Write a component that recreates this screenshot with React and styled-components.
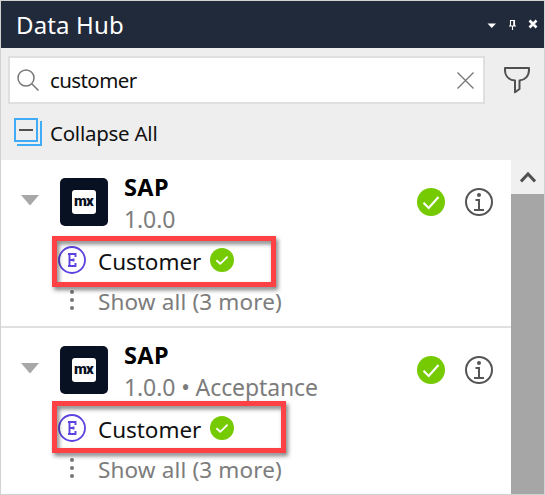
import React from "react";
import styled, { createGlobalStyle } from "styled-components";

const Global = createGlobalStyle`
  *, *::before, *::after { box-sizing: border-box; }
  body { margin: 0; background: #fff; font-family: "Noto Sans", "Open Sans", sans-serif; }
  svg { display: block; flex: none; }
`;

const Panel = styled.main`
  width: 545px;
  height: 495px;
  display: flex;
  flex-direction: column;
  border: 1px solid #d2d2d2;
  background: #eee;
  overflow: hidden;
`;

const TitleBar = styled.header`
  height: 47px;
  flex: none;
  display: flex;
  align-items: center;
  padding: 0 6px 0 15px;
  background: #212a3a;
`;

const Title = styled.h1`
  flex: 1;
  margin: 0;
  font-size: 24px;
  font-weight: 400;
  line-height: 48px;
  letter-spacing: 0.15px;
  color: #fff;
`;

const SearchRow = styled.div`
  display: flex;
  align-items: center;
  padding: 8px 13px 0 7px;
  height: 56px;
  flex: none;
`;

const SearchBox = styled.label`
  width: 477px;
  height: 48px;
  display: flex;
  align-items: center;
  padding: 0 9px 0 7px;
  border: 2px solid #dfdfdf;
  background: #fff;
`;

const SearchText = styled.span`
  flex: 1;
  padding: 0 0 0 10px;
  font-size: 20.5px;
  line-height: 44px;
  letter-spacing: -0.6px;
  color: #111;
`;

const FilterButton = styled.span`
  margin-left: 18px;
`;

const CollapseRow = styled.div`
  height: 56px;
  flex: none;
  display: flex;
  align-items: flex-start;
  gap: 8px;
  padding: 13px 0 0 12px;
`;

const CollapseText = styled.span`
  font-size: 20.5px;
  line-height: 32px;
  letter-spacing: -0.25px;
  color: #111;
`;

const Results = styled.div`
  flex: 1;
  min-height: 0;
  display: flex;
`;

const List = styled.div`
  width: 510px;
  background: #fff;
`;

const ScrollBar = styled.div`
  width: 33px;
  background: #a6a6a6;
`;

const ScrollUp = styled.div`
  height: 34px;
  display: flex;
  align-items: center;
  justify-content: center;
  background: #f0f0f0;
`;

const Item = styled.section`
  position: relative;
  height: 168px;
  padding: 14px 18px 0 19px;
  border-bottom: 2px solid #e0e0e0;
  &:last-child { border-bottom: 0; }
`;

const ItemHead = styled.div`
  display: flex;
  height: 66px;
`;

const Toggle = styled.span`
  margin-top: 20px;
  width: 40px;
`;

const Logo = styled.div`
  width: 48px;
  height: 48px;
  margin-top: 4px;
  display: flex;
  align-items: center;
  justify-content: center;
  border-radius: 5px;
  background: #081122;
`;

const LogoTile = styled.span`
  width: 24px;
  height: 24px;
  border-radius: 3px;
  background: #fff;
  color: #081122;
  text-align: center;
  font: 900 15px/23px "Roboto", sans-serif;
  letter-spacing: -0.9px;
  padding-right: 1px;
`;

const Names = styled.div`
  flex: 1;
  padding-left: 16px;
`;

const Name = styled.div`
  font-size: 23.5px;
  font-weight: 700;
  line-height: 26px;
  letter-spacing: 0.4px;
  color: #000;
`;

const Version = styled.div`
  font-size: 23px;
  line-height: 32px;
  padding-top: 3px;
  letter-spacing: -0.1px;
  color: #7c7c7c;
  white-space: nowrap;
`;

const Actions = styled.div`
  display: flex;
  gap: 20px;
  padding-top: 14px;
`;

const EntityRow = styled.div`
  display: flex;
  align-items: center;
  height: 40px;
  padding-left: 38px;
`;

const EntityName = styled.span`
  width: 113px;
  padding-left: 12px;
  margin-right: 11px;
  font-size: 22.5px;
  line-height: 40px;
  letter-spacing: -0.05px;
  color: #111;
  margin-top: 4px;
`;

const MoreRow = styled.div`
  display: flex;
  align-items: center;
  height: 40px;
  padding-left: 49px;
  gap: 24px;
`;

const MoreText = styled.span`
  font-size: 22.5px;
  line-height: 40px;
  margin-top: 4px;
  letter-spacing: 0.15px;
  color: #7c7c7c;
  white-space: nowrap;
`;

const Highlight = styled.div`
  position: absolute;
  left: 51px;
  top: ${(p) => p.$top}px;
  width: ${(p) => p.$width}px;
  height: ${(p) => p.$height}px;
  border: 5px solid #fd4145;
  filter: drop-shadow(2px 3px 2px rgba(0, 0, 0, 0.5));
`;

const Check = ({ size }) => (
  <svg width={size} height={size} viewBox="0 0 28 28">
    <circle cx="14" cy="14" r="14" fill="#76ca02" />
    <path d={size > 24 ? "M6.5 14.8 L11.7 20 L21.5 9" : "M7.5 14.3 L12 18.4 L20.5 10"} fill="none" stroke="#fff" strokeWidth="2.1" />
  </svg>
);

const Info = () => (
  <svg width="28" height="28" fill="none" stroke="#555" strokeWidth="2">
    <circle cx="14" cy="14" r="13" />
    <circle cx="14" cy="7" r="2" fill="#555" stroke="none" />
    <path d="M10.5 12H14V22M9 22H19" />
  </svg>
);

const Entity = () => (
  <svg width="28" height="28" fill="none" stroke="#5b43e0">
    <circle cx="14" cy="14" r="13" strokeWidth="1.8" />
    <path d="M10 8H17.5V11M10 20H17.5V17M11.5 8V20M11.5 14H15.5M15.5 12.5V15.5" strokeWidth="1.9" />
  </svg>
);

const items = [
  { version: "1.0.0", top: 76, width: 224, height: 51 },
  { version: "1.0.0 • Acceptance", top: 73, width: 234, height: 52 },
];

export default function App() {
  return (
    <>
      <Global />
      <Panel>
        <TitleBar>
          <Title>Data Hub</Title>
          <svg width="51" height="12" fill="none" stroke="#fff">
            <path d="M0.5 4.5H9L4.75 9Z" fill="#fff" stroke="none" />
            <path d="M23.5 7V1.5H27.5V7M22 7H29M25.5 7V11" strokeWidth="1.1" />
            <path d="M27 1.5V7" strokeWidth="1.5" />
            <path d="M42.5 1.5L49.5 8.5M49.5 1.5L42.5 8.5" strokeWidth="2.6" />
          </svg>
        </TitleBar>
        <SearchRow>
          <SearchBox>
            <svg width="23" height="23" fill="none" stroke="#777" strokeWidth="1.5">
              <circle cx="9" cy="9" r="8" />
              <path d="M15 15L21.5 21.5" />
            </svg>
            <SearchText>customer</SearchText>
            <svg width="17" height="17" stroke="#777" strokeWidth="1.3">
              <path d="M.5 .5L16.5 16.5M16.5 .5L.5 16.5" />
            </svg>
          </SearchBox>
          <FilterButton>
            <svg width="28" height="28" fill="none" stroke="#505050" strokeWidth="2" strokeLinejoin="round">
              <path d="M2 2H26V4C26 10 22 14 16.5 14.5V23L12 26.3V14.5C6 14 2 10 2 4Z" />
            </svg>
          </FilterButton>
        </SearchRow>
        <CollapseRow>
          <svg width="29" height="30" fill="none" stroke="#42abf6" strokeWidth="2">
            <path d="M2 2H24V24H2ZM28 4V28H4" />
            <path d="M6 13H20" stroke="#505050" />
          </svg>
          <CollapseText>Collapse All</CollapseText>
        </CollapseRow>
        <Results>
          <List>
            {items.map((it) => (
              <Item key={it.version}>
                <ItemHead>
                  <Toggle>
                    <svg width="20" height="12"><path d="M1 1H19L10 11.5Z" fill="#a8a8a8" /></svg>
                  </Toggle>
                  <Logo><LogoTile>mx</LogoTile></Logo>
                  <Names>
                    <Name>SAP</Name>
                    <Version>{it.version}</Version>
                  </Names>
                  <Actions>
                    <Check size={28} />
                    <Info />
                  </Actions>
                </ItemHead>
                <EntityRow>
                  <Entity />
                  <EntityName>Customer</EntityName>
                  <Check size={24} />
                </EntityRow>
                <MoreRow>
                  <svg width="5" height="22" fill="#777">
                    <circle cx="3" cy="3" r="2" /><circle cx="3" cy="11" r="2" /><circle cx="3" cy="19" r="2" />
                  </svg>
                  <MoreText>Show all (3 more)</MoreText>
                </MoreRow>
                <Highlight $top={it.top} $width={it.width} $height={it.height} />
              </Item>
            ))}
          </List>
          <ScrollBar>
            <ScrollUp>
              <svg width="16" height="12" fill="none" stroke="#505050" strokeWidth="3">
                <path d="M1 10.5L8 3L15 10.5" />
              </svg>
            </ScrollUp>
          </ScrollBar>
        </Results>
      </Panel>
    </>
  );
}
